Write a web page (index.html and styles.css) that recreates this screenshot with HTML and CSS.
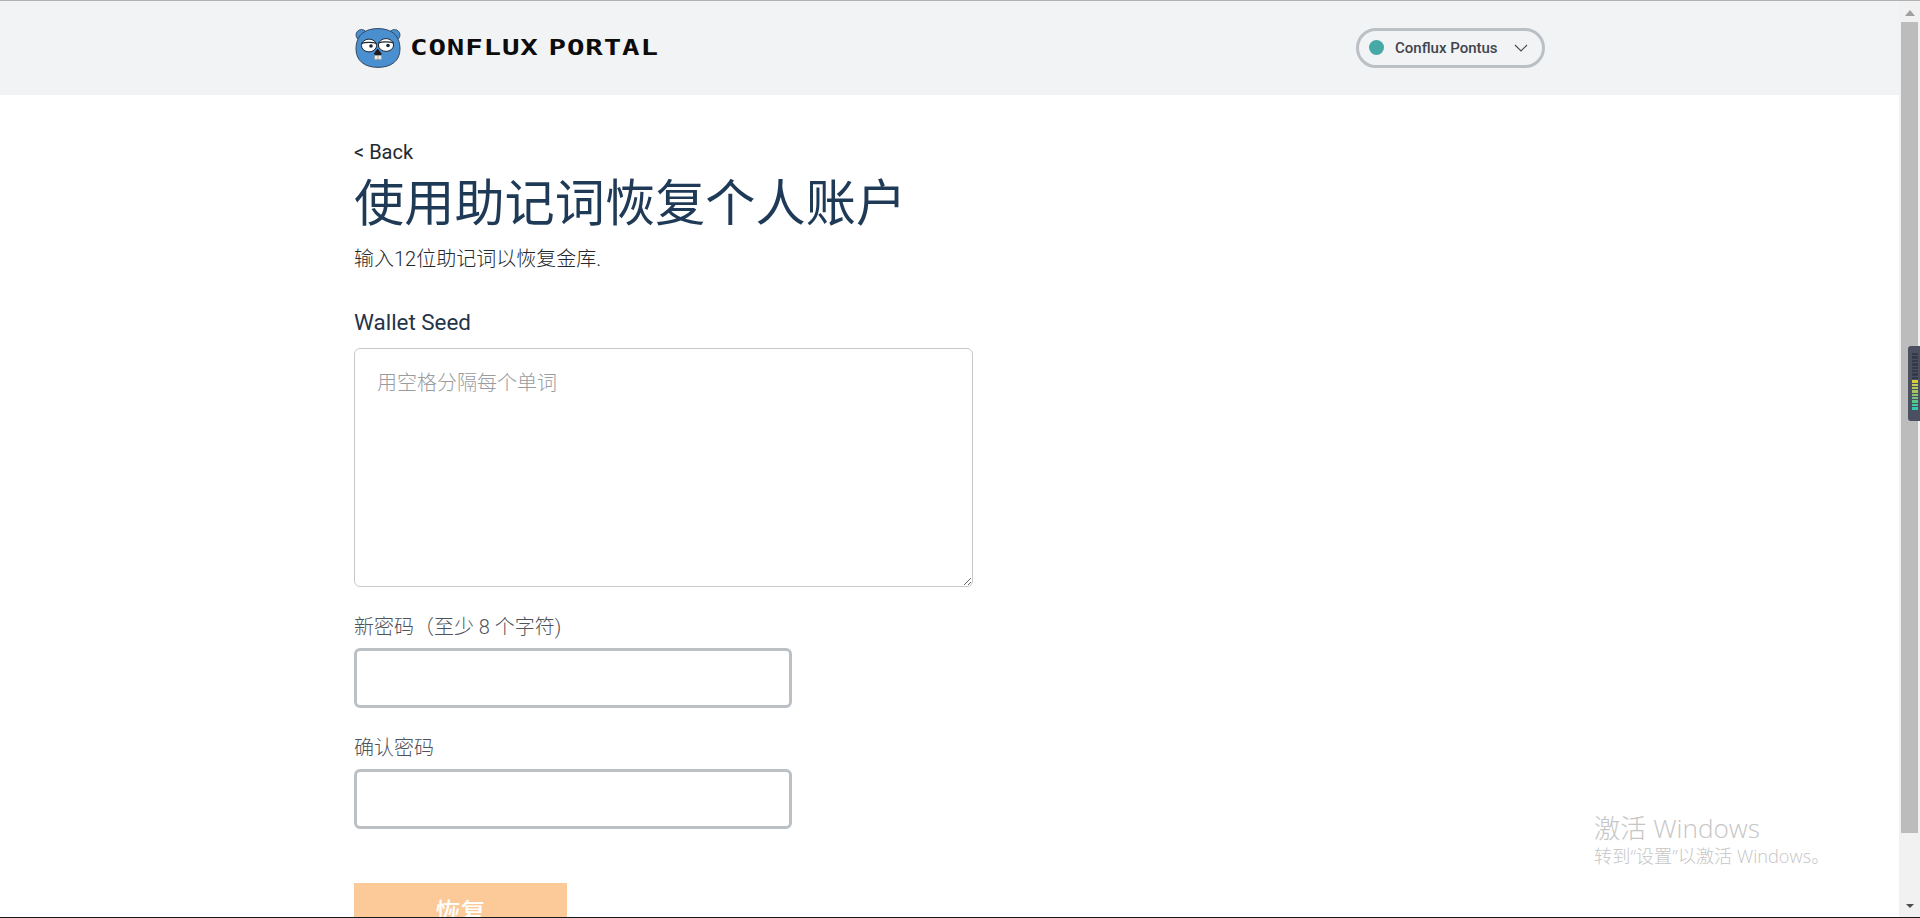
FILE: index.html
```html
<!DOCTYPE html>
<html lang="zh">
<head>
<meta charset="utf-8">
<title>Conflux Portal</title>
<link rel="stylesheet" href="styles.css">
</head>
<body>
<div class="frame">
  <div class="page">
    <header class="header">
      <div class="header-inner">
        <div class="brand">
          <svg class="gopher" viewBox="0 0 46 40" width="46" height="40" aria-hidden="true">
            <circle cx="6.5" cy="7" r="5.5" fill="#4a8fcf" stroke="#2a3c52" stroke-width="0.8"/>
            <circle cx="39.5" cy="7" r="5.5" fill="#4a8fcf" stroke="#2a3c52" stroke-width="0.8"/>
            <path d="M23 .6C35 .6 45 6 45 21C45 33 36 39.4 23 39.4C10 39.4 1 33 1 21C1 6 11 .6 23 .6Z" fill="#4a8fcf" stroke="#2a3c52" stroke-width="0.9"/>
            <ellipse cx="14" cy="17.5" rx="7.6" ry="6.4" fill="#fff" stroke="#1c2530" stroke-width="1"/>
            <ellipse cx="31" cy="17" rx="7.6" ry="6.4" fill="#fff" stroke="#1c2530" stroke-width="1"/>
            <path d="M6.4 15.5C10 14 18 14 21.6 15.5M23.4 15C27 13.5 35 13.5 38.6 15" fill="none" stroke="#1c2530" stroke-width="1.2"/>
            <circle cx="16" cy="18" r="1.8" fill="#1c2530"/>
            <circle cx="33" cy="17.5" r="1.8" fill="#1c2530"/>
            <path d="M18.6 26L22.6 20.5L27 26C25 27.6 21 27.6 18.6 26Z" fill="#1e1a1c"/>
            <path d="M19.5 27.5H26.5V31.5H19.5Z" fill="#f0ece2" stroke="#8c8c80" stroke-width="0.5"/>
            <path d="M23 27.5V31.5" stroke="#8c8c80" stroke-width="0.6"/>
          </svg>
          <span class="wordmark">CONFLUX PORTAL</span>
        </div>
        <div class="network">
          <span class="network-dot"></span>
          <span class="network-name">Conflux Pontus</span>
          <svg class="chevron" viewBox="0 0 14 8" width="14" height="8" aria-hidden="true">
            <path d="M1 1L7 7L13 1" fill="none" stroke="#4a4f55" stroke-width="1.2"/>
          </svg>
        </div>
      </div>
    </header>
    <main class="content">
      <a class="back">&lt; Back</a>
      <h1 class="title">使用助记词恢复个人账户</h1>
      <p class="subtitle">输入12位助记词以恢复金库.</p>
      <label class="seed-label">Wallet Seed</label>
      <textarea class="seed" placeholder="用空格分隔每个单词"></textarea>
      <label class="field-label first">新密码（至少 8 个字符)</label>
      <input class="field" type="password">
      <label class="field-label">确认密码</label>
      <input class="field" type="password">
      <button class="restore">恢复</button>
    </main>
  </div>
  <div class="scrollbar">
    <span class="arrow-up"></span>
    <div class="thumb"></div>
    <span class="arrow-down"></span>
  </div>
</div>
<div class="meter">
  <i class="off"></i><i class="off"></i><i class="off"></i><i class="off"></i><i class="off"></i><i class="off"></i><i class="off"></i><i class="off"></i>
  <i class="m1"></i><i class="m2"></i><i class="m3"></i><i class="m4"></i><i class="m5"></i><i class="m6"></i><i class="m7"></i><i class="m8"></i><i class="m9"></i>
</div>
<div class="watermark">
  <div class="wm-title">激活 Windows</div>
  <div class="wm-sub">转到“设置”以激活 Windows。</div>
</div>
</body>
</html>
```

FILE: styles.css
```css
* { box-sizing: border-box; }
html, body { margin: 0; height: 100%; overflow: hidden; background: #fff; }
body { font-family: Roboto, "Noto Sans CJK SC", sans-serif; }

.frame {
  display: flex;
  height: 918px;
  border-top: 1px solid #b3b1b3;
  border-bottom: 1px solid #1a1a1a;
}
.page { flex: 1; min-width: 0; overflow: hidden; }

.header { height: 94px; background: #f2f3f5; }
.header-inner {
  width: 1191px;
  margin-left: 354px;
  height: 100%;
  display: flex;
  align-items: center;
  justify-content: space-between;
}
.brand { display: flex; align-items: center; margin-top: -1px; }
.gopher { margin-left: 1px; flex: none; }
.wordmark {
  display: inline-block;
  margin-left: 9px;
  width: 246px;
  font-family: "DejaVu Sans Mono", monospace;
  font-weight: 700;
  font-size: 20.5px;
  line-height: 20px;
  letter-spacing: 0.6px;
  word-spacing: -6px;
  color: #0c0c0c;
  white-space: nowrap;
  transform: scaleX(1.42);
  transform-origin: left center;
}
.network {
  width: 189px;
  height: 40px;
  margin-top: -1px;
  border: 3px solid #bbc0c5;
  border-radius: 20px;
  display: flex;
  align-items: center;
  padding-left: 10px;
}
.network-dot { width: 15px; height: 15px; border-radius: 50%; background: #47a8a8; flex: none; }
.network-name {
  margin-left: 11px;
  font-size: 15px;
  font-weight: 500;
  color: #3f454c;
  white-space: nowrap;
}
.chevron { margin-left: 16px; flex: none; }

.content { padding: 46px 0 0 354px; display: flex; flex-direction: column; align-items: flex-start; }
.back { font-size: 20px; line-height: 22px; color: #24292e; }
.title {
  margin: 0;
  font-family: "Noto Sans CJK SC", sans-serif;
  font-weight: 400;
  font-size: 50.2px;
  line-height: 72px;
  color: #1f3a56;
  white-space: nowrap;
}
.subtitle {
  margin: 11px 0 0;
  font-family: Roboto, "Noto Sans CJK SC", sans-serif;
  font-weight: 300;
  font-size: 20px;
  line-height: 26px;
  color: #24292e;
  white-space: nowrap;
}
.seed-label { margin-top: 36px; font-size: 22.4px; line-height: 28px; color: #24344a; }
.seed {
  display: block;
  margin-top: 12px;
  width: 619px;
  height: 239px;
  padding: 19px 22px;
  border: 1px solid #c9c9c9;
  border-radius: 6px;
  outline: none;
  background: #fff;
  font-family: "Noto Sans CJK SC", sans-serif;
  font-weight: 300;
  font-size: 20px;
  line-height: 28px;
}
.seed::placeholder { color: #989ca0; opacity: 1; }
.field-label {
  margin-top: 27px;
  font-family: Roboto, "Noto Sans CJK SC", sans-serif;
  font-weight: 300;
  font-size: 20px;
  line-height: 26px;
  color: #4f5459;
  white-space: nowrap;
}
.field {
  display: block;
  margin-top: 8px;
  width: 438px;
  height: 60px;
  border: 3px solid #bbc0c5;
  border-radius: 6px;
  outline: none;
  background: #fff;
}
.restore {
  margin-top: 54px;
  width: 213px;
  height: 54px;
  border: 0;
  border-radius: 0;
  background: #fcc999;
  color: #fff;
  font-family: "Noto Sans CJK SC", sans-serif;
  font-size: 25px;
  font-weight: 500;
  padding: 0;
}

.scrollbar {
  flex: none;
  width: 21px;
  background: #f1f1f1;
  padding-right: 2px;
  padding-left: 2px;
  display: flex;
  flex-direction: column;
  align-items: stretch;
}
.arrow-up {
  width: 0;
  height: 0;
  margin: 9px auto 6px;
  border-left: 5px solid transparent;
  border-right: 5px solid transparent;
  border-bottom: 6px solid #a0a0a0;
}
.thumb { height: 811px; background: #bcbcbc; }
.arrow-down {
  width: 0;
  height: 0;
  margin: 71px auto 0;
  border-left: 4px solid transparent;
  border-right: 4px solid transparent;
  border-top: 4px solid #4d4d4d;
}

.meter {
  position: absolute;
  top: 346px;
  left: 1908px;
  width: 12px;
  height: 75px;
  background: #4a5060;
  border-radius: 3px 0 0 3px;
  padding: 7px 0 0 4px;
  display: flex;
  flex-direction: column;
  gap: 1px;
}
.meter i { display: block; width: 6px; height: 2.4px; flex: none; }
.meter .off { background: #343a48; }
.meter .m1 { background: #d8cb3e; }
.meter .m2 { background: #c8cc50; }
.meter .m3 { background: #b7c95a; }
.meter .m4 { background: #a2c762; }
.meter .m5 { background: #8ac66c; }
.meter .m6 { background: #6fc67c; }
.meter .m7 { background: #58c78c; }
.meter .m8 { background: #42c99c; }
.meter .m9 { background: #32cbaa; }

.watermark {
  position: absolute;
  top: 813px;
  left: 1594px;
  font-family: "Open Sans", "Noto Sans CJK SC", sans-serif;
  font-weight: 300;
  color: #c6c6c6;
  white-space: nowrap;
}
.wm-title { font-size: 26.2px; line-height: 30px; }
.wm-sub { font-size: 18.2px; line-height: 26px; }
```
